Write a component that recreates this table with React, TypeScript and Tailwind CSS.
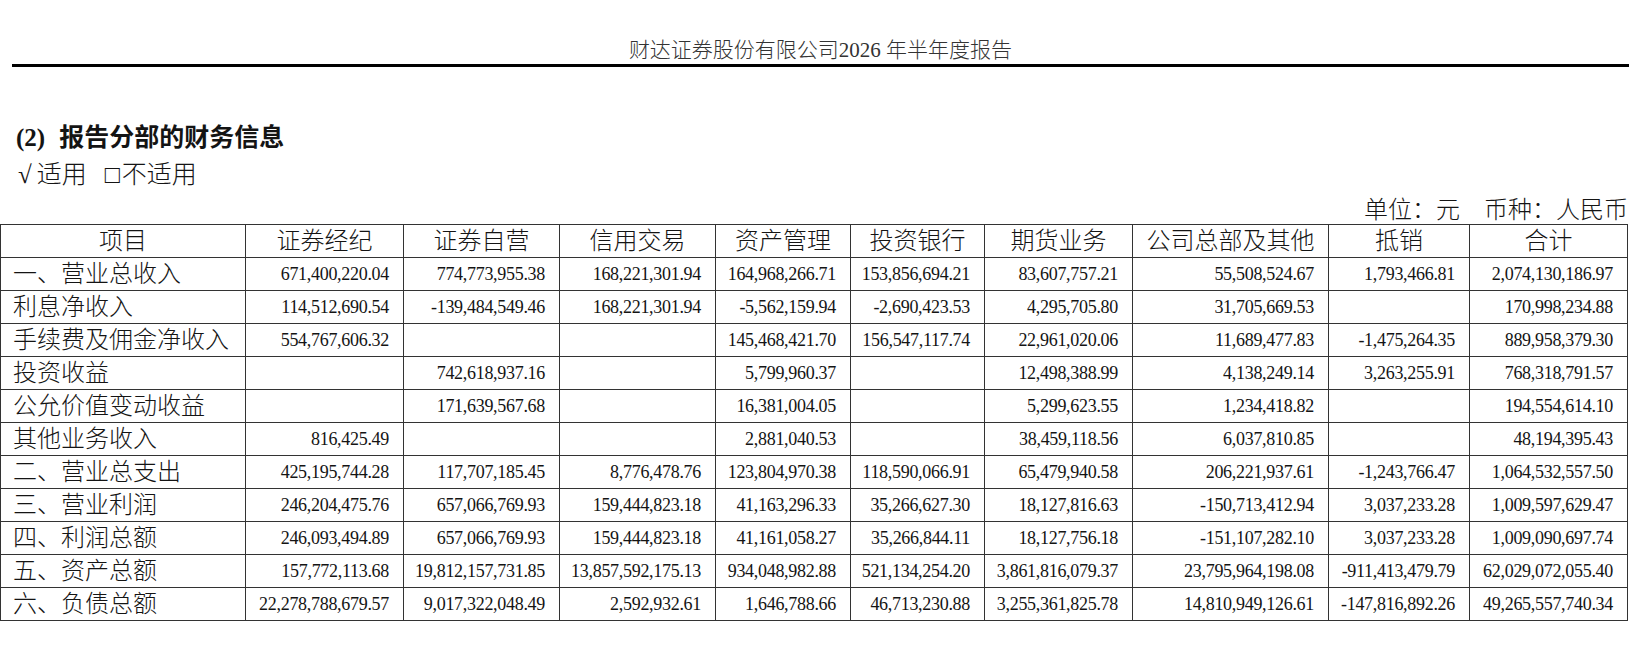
const columns = [
  "项目",
  "证券经纪",
  "证券自营",
  "信用交易",
  "资产管理",
  "投资银行",
  "期货业务",
  "公司总部及其他",
  "抵销",
  "合计",
];

const rows: [string, string[]][] = [
  ["一、营业总收入", ["671,400,220.04", "774,773,955.38", "168,221,301.94", "164,968,266.71", "153,856,694.21", "83,607,757.21", "55,508,524.67", "1,793,466.81", "2,074,130,186.97"]],
  ["利息净收入", ["114,512,690.54", "-139,484,549.46", "168,221,301.94", "-5,562,159.94", "-2,690,423.53", "4,295,705.80", "31,705,669.53", "", "170,998,234.88"]],
  ["手续费及佣金净收入", ["554,767,606.32", "", "", "145,468,421.70", "156,547,117.74", "22,961,020.06", "11,689,477.83", "-1,475,264.35", "889,958,379.30"]],
  ["投资收益", ["", "742,618,937.16", "", "5,799,960.37", "", "12,498,388.99", "4,138,249.14", "3,263,255.91", "768,318,791.57"]],
  ["公允价值变动收益", ["", "171,639,567.68", "", "16,381,004.05", "", "5,299,623.55", "1,234,418.82", "", "194,554,614.10"]],
  ["其他业务收入", ["816,425.49", "", "", "2,881,040.53", "", "38,459,118.56", "6,037,810.85", "", "48,194,395.43"]],
  ["二、营业总支出", ["425,195,744.28", "117,707,185.45", "8,776,478.76", "123,804,970.38", "118,590,066.91", "65,479,940.58", "206,221,937.61", "-1,243,766.47", "1,064,532,557.50"]],
  ["三、营业利润", ["246,204,475.76", "657,066,769.93", "159,444,823.18", "41,163,296.33", "35,266,627.30", "18,127,816.63", "-150,713,412.94", "3,037,233.28", "1,009,597,629.47"]],
  ["四、利润总额", ["246,093,494.89", "657,066,769.93", "159,444,823.18", "41,161,058.27", "35,266,844.11", "18,127,756.18", "-151,107,282.10", "3,037,233.28", "1,009,090,697.74"]],
  ["五、资产总额", ["157,772,113.68", "19,812,157,731.85", "13,857,592,175.13", "934,048,982.88", "521,134,254.20", "3,861,816,079.37", "23,795,964,198.08", "-911,413,479.79", "62,029,072,055.40"]],
  ["六、负债总额", ["22,278,788,679.57", "9,017,322,048.49", "2,592,932.61", "1,646,788.66", "46,713,230.88", "3,255,361,825.78", "14,810,949,126.61", "-147,816,892.26", "49,265,557,740.34"]],
];

export default function App() {
  return (
    <div className="min-h-[652px] bg-white text-[#141414] font-['Liberation_Serif','Noto_Sans_CJK_SC',serif]">
      <header className="ml-[12px] mr-[2px] border-b-[3px] border-black pt-[36px] text-center text-[21px] leading-[28px] text-[#333] font-light">
        财达证券股份有限公司2026 年半年度报告
      </header>

      <h2 className="mt-[55px] pl-[16px] text-[25px] font-bold leading-[32px]">
        <span className="mr-[14px]">(2)</span>报告分部的财务信息
      </h2>
      <p className="mt-[5px] pl-[18px] text-[25px] font-light leading-[32px]">
        <span className="mr-[5px]">√</span>适用
        <span className="ml-[18px] mr-[2px]">□</span>不适用
      </p>
      <p className="mt-[5px] pr-[3px] text-right text-[24px] font-light leading-[28px]">
        单位：元　币种：人民币
      </p>

      <table className="w-[1627px] table-fixed border-collapse">
        <colgroup>
          <col className="w-[245px]" />
          <col className="w-[158px]" />
          <col className="w-[156px]" />
          <col className="w-[156px]" />
          <col className="w-[135px]" />
          <col className="w-[134px]" />
          <col className="w-[148px]" />
          <col className="w-[196px]" />
          <col className="w-[141px]" />
          <col className="w-[158px]" />
        </colgroup>
        <thead>
          <tr>
            {columns.map((c) => (
              <th
                key={c}
                className="h-[33px] border border-[#333] p-0 text-center text-[24px] font-light leading-none"
              >
                {c}
              </th>
            ))}
          </tr>
        </thead>
        <tbody>
          {rows.map(([label, values]) => (
            <tr key={label}>
              <td className="h-[33px] border border-[#333] p-0 pl-[12px] text-left text-[24px] font-light leading-none whitespace-nowrap">
                {label}
              </td>
              {values.map((v, i) => (
                <td
                  key={i}
                  className="h-[33px] border border-[#333] p-0 pr-[14px] text-right text-[18px] leading-none tracking-[-0.3px] whitespace-nowrap"
                >
                  {v}
                </td>
              ))}
            </tr>
          ))}
        </tbody>
      </table>
    </div>
  );
}
